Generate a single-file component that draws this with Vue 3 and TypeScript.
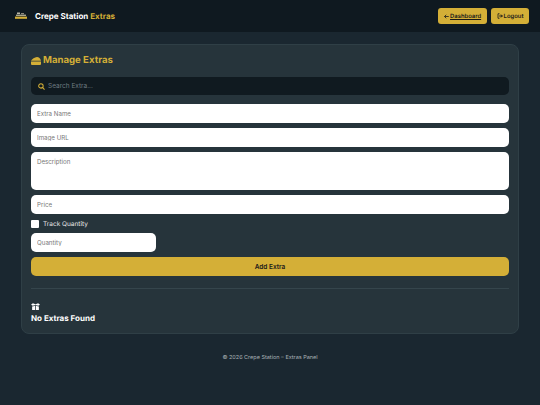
<script setup lang="ts">
const fields: string[] = ['Extra Name', 'Image URL']
</script>

<template>
  <div class="page">
    <header class="topbar">
      <div class="brand">
        <svg class="logo" width="12" height="8" viewBox="0 0 12 8">
          <rect x="2" y="0.5" width="3" height="1.6" fill="#b9b6a6" />
          <rect x="6" y="1" width="3" height="1.2" fill="#8d8a7c" />
          <rect x="1" y="2.6" width="10" height="1.4" fill="#a8a58f" />
          <rect x="0" y="4.6" width="12" height="2.2" fill="#d4af37" />
        </svg>
        <span class="brand-name">Crepe Station <span class="gold">Extras</span></span>
      </div>
      <nav class="actions">
        <a class="btn">
          <svg width="5" height="5" viewBox="0 0 10 10" fill="none" stroke="#1a1a1a" stroke-width="1.6">
            <path d="M9.500 5H1M4.500 1.500 1 5l3.500 3.500" />
          </svg>
          <span class="underline">Dashboard</span>
        </a>
        <a class="btn logout">
          <svg width="6" height="6" viewBox="0 0 12 12" fill="none" stroke="#1a1a1a" stroke-width="1.600">
            <path d="M5 1.500H2v9h3" />
            <path d="M4.500 6h6M8 3.200 10.800 6 8 8.800" stroke-width="2" />
          </svg>
          Logout
        </a>
      </nav>
    </header>

    <main class="card">
      <h2 class="title">
        <svg width="10" height="8" viewBox="0 0 10 8">
          <path d="M0 3.800C1 2 3.600.1 6 0c1.800 0 3.500 1.400 4 3.800z" fill="#d4af37" />
          <path d="M0 4.400h10V7a1 1 0 0 1-1 1H1a1 1 0 0 1-1-1z" fill="#d4af37" />
        </svg>
        Manage Extras
      </h2>

      <div class="search">
        <svg width="7" height="7" viewBox="0 0 12 12" fill="none" stroke="#d4af37" stroke-width="1.800">
          <circle cx="5" cy="5" r="3.800" />
          <path d="m8 8 3.200 3.200" />
        </svg>
        <input class="search-input" placeholder="Search Extra..." />
      </div>

      <form class="form" @submit.prevent>
        <input v-for="f in fields" :key="f" class="field" :placeholder="f" />
        <textarea class="field area" placeholder="Description"></textarea>
        <input class="field" placeholder="Price" />
        <label class="track"><span class="check"></span>Track Quantity</label>
        <input class="field qty" placeholder="Quantity" />
        <button class="add" type="submit">Add Extra</button>
      </form>

      <hr class="rule" />

      <section class="empty">
        <svg width="9" height="7" viewBox="0 0 12 9" fill="#fff">
          <path d="M0 2.200 2.500 0 6 1.400 9.500 0 12 2.200 9.500 3.600 6 2 2.500 3.600z" />
          <path d="M1.500 4.200 2.500 4.400 5.500 3v6H1.500zM6.500 3l3 1.400 1-.2V9h-4z" />
        </svg>
        <h3 class="empty-title">No Extras Found</h3>
      </section>
    </main>

    <footer class="foot">© 2026 Crepe Station – Extras Panel</footer>
  </div>
</template>

<style>
html, body { margin: 0; background: #1a2730; }
</style>

<style scoped>
.page {
  width: 540px;
  height: 405px;
  box-sizing: border-box;
  overflow: hidden;
  background: #1a2730;
  font-family: "Inter", "Noto Sans", sans-serif;
  color: #fff;
  text-rendering: geometricPrecision;
}
.topbar {
  height: 32px;
  display: flex;
  align-items: center;
  justify-content: space-between;
  padding: 0 11px 0 15px;
  background: #0f1920;
  box-sizing: border-box;
}
.brand { display: flex; align-items: center; gap: 8px; }
.logo { display: block; margin-top: -1px; }
.brand-name { font-size: 8px; font-weight: 700; }
.gold { color: #d4af37; }
.actions { display: flex; gap: 4px; }
.btn {
  height: 16px;
  box-sizing: border-box;
  display: flex;
  align-items: center;
  gap: 1px;
  padding: 0 6px;
  background: #d4af37;
  color: #1a1a1a;
  border-radius: 3px;
  font-size: 5.900px;
  font-weight: 600;
}
.logout { padding: 0 5.500px; }
.underline { text-decoration: underline; }
.card {
  margin: 12px 21px 0;
  height: 290px;
  box-sizing: border-box;
  padding: 9px;
  background: #26343b;
  border: 1px solid #2f3f46;
  border-radius: 8px;
}
.title {
  margin: 0 0 10px;
  height: 13px;
  display: flex;
  align-items: center;
  gap: 2px;
  color: #d4af37;
  font-size: 9.600px;
  font-weight: 700;
}
.search {
  height: 18px;
  display: flex;
  align-items: center;
  gap: 3px;
  padding: 0 7px;
  background: #101a20;
  border-radius: 5px;
}
.search-input {
  flex: 1;
  min-width: 0;
  padding: 0;
  border: 0;
  outline: 0;
  background: transparent;
  color: #fff;
  font: 6.500px "Inter", "Noto Sans", sans-serif;
}
.search-input::placeholder { color: #6f7a80; }
.form { display: flex; flex-direction: column; gap: 5px; margin-top: 9px; }
.field {
  display: block;
  height: 19px;
  box-sizing: border-box;
  padding: 0 6px;
  border: 0;
  outline: 0;
  background: #fff;
  border-radius: 5px;
  font: 6.200px "Inter", "Noto Sans", sans-serif;
  resize: none;
}
.field::placeholder { color: #777; }
.area { height: 38px; padding-top: 6px; }
.qty { width: 125px; }
.track {
  display: flex;
  align-items: center;
  gap: 4px;
  height: 9px;
  font-size: 6.500px;
  color: #e6e6e6;
  margin: 0;
}
.check {
  width: 8px;
  height: 8px;
  background: #fff;
  border-radius: 1px;
}
.add {
  height: 19px;
  border: 0;
  padding: 0;
  background: #d4af37;
  color: #1a1a1a;
  border-radius: 5px;
  font: 600 6.500px "Inter", "Noto Sans", sans-serif;
}
.rule {
  margin: 12px 0 0;
  border: 0;
  border-top: 1px solid #35454c;
}
.empty { margin-top: 14px; }
.empty svg { display: block; }
.empty-title {
  margin: 2px 0 0;
  font-size: 8px;
  font-weight: 700;
  line-height: 12px;
  color: #fff;
}
.foot {
  margin-top: 21px;
  text-align: center;
  font-size: 5.500px;
  color: #a9b2b6;
}
</style>
